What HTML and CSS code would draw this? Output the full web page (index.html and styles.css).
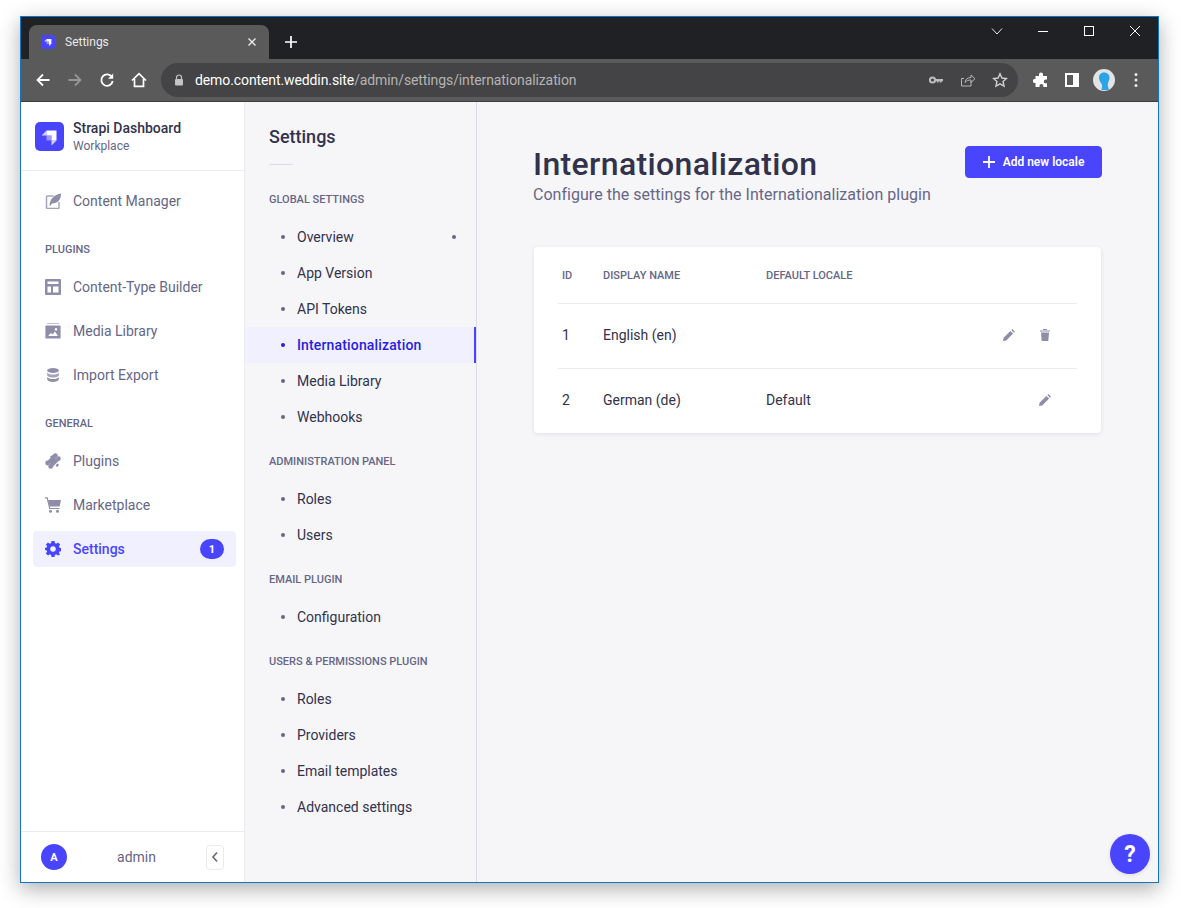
FILE: index.html
```html
<!DOCTYPE html>
<html lang="en">
<head>
<meta charset="utf-8">
<title>Settings</title>
<link rel="stylesheet" href="styles.css">
</head>
<body>
<div class="window">
  <div class="titlebar">
    <div class="tab">
      <span class="fav"><svg viewBox="0 0 29 29" width="14" height="14"><path d="M11.500 8.500H21.500V18.500H16.500V13.500H11.500z" fill="#fff"/><path d="M11.500 8.500V13.500H6.500zM16.500 18.500H21.500L16.500 23.500z" fill="#fff" opacity=".75"/><path d="M11.500 13.500H16.500V18.500H11.500z" fill="#fff" opacity=".45"/></svg></span>
      <span class="tab-title">Settings</span>
      <svg class="tab-x" viewBox="0 0 10 10" width="10" height="10"><path d="M1.500 1.500l7 7M8.500 1.500l-7 7" stroke="#e8eaed" stroke-width="1.400"/></svg>
    </div>
    <svg class="newtab" viewBox="0 0 14 14" width="14" height="14"><path d="M7 1v12M1 7h12" stroke="#fff" stroke-width="1.700"/></svg>
    <div class="winctl">
      <svg viewBox="0 0 12 12" width="12" height="12"><path d="M1 3.500l5 5.500 5-5.500" fill="none" stroke="#e8e8e8"/></svg>
      <svg viewBox="0 0 12 12" width="12" height="12"><path d="M1 6.500h10" stroke="#fff"/></svg>
      <svg viewBox="0 0 12 12" width="12" height="12"><rect x="1.500" y="1.500" width="9" height="9" fill="none" stroke="#fff"/></svg>
      <svg viewBox="0 0 12 12" width="12" height="12"><path d="M1 1l10 10M11 1L1 11" stroke="#fff"/></svg>
    </div>
  </div>
  <div class="toolbar">
    <svg class="tb" viewBox="0 0 16 16" width="16" height="16"><path d="M14.500 8H2.500M8 2.500L2.500 8 8 13.500" fill="none" stroke="#fff" stroke-width="1.800"/></svg>
    <svg class="tb" viewBox="0 0 16 16" width="16" height="16"><path d="M1.500 8h12M8 2.500L13.500 8 8 13.500" fill="none" stroke="#969696" stroke-width="1.800"/></svg>
    <svg class="tb" viewBox="0 0 16 16" width="16" height="16"><path d="M13 5.200A5.700 5.700 0 1 0 13.700 9" fill="none" stroke="#fff" stroke-width="1.800"/><path d="M14.200 1.500v5.200H9z" fill="#fff"/></svg>
    <svg class="tb" viewBox="0 0 16 16" width="16" height="16"><path d="M1 8.500L8 1.700l7 6.800M3.500 7v7.300h9V7" fill="none" stroke="#fff" stroke-width="1.700"/></svg>
    <div class="omnibox">
      <svg class="lock" viewBox="0 0 10 12" width="10" height="12"><path d="M2.500 5V3.500a2.500 2.500 0 0 1 5 0V5" fill="none" stroke="#c4c4c4" stroke-width="1.200"/><rect x="1" y="5" width="8" height="6.500" rx="1" fill="#c4c4c4"/></svg>
      <span class="url"><span class="host">demo.content.weddin.site</span>/admin/settings/internationalization</span>
      <svg class="omni-i first" viewBox="0 0 16 16" width="16" height="16"><circle cx="4.500" cy="8" r="2.600" fill="none" stroke="#bdbdbd" stroke-width="2"/><path d="M7 7h8v2.200h-1.400v1.300h-1.800V9.200h-1.200v1.300H9V9.200H7z" fill="#bdbdbd"/></svg>
      <svg class="omni-i" viewBox="0 0 16 16" width="16" height="16"><path d="M11 9v5H1.500V6.500H4" fill="none" stroke="#b5b5b5"/><path d="M5 10.500c.3-3.500 3-5 6-5V3l4 3.800-4 3.700V8c-2.500 0-4.500.6-6 2.500z" fill="none" stroke="#b5b5b5"/></svg>
      <svg class="omni-i" viewBox="0 0 16 16" width="16" height="16"><path d="M8 1.800l1.900 4.200 4.600.5-3.400 3.100.9 4.600L8 11.900l-4 2.300.9-4.600L1.500 6.500l4.600-.5z" fill="none" stroke="#d0d0d0" stroke-width="1.400"/></svg>
    </div>
    <svg class="ext" viewBox="0 0 16 16" width="16" height="16"><path d="M6 2.500a2 2 0 0 1 4 0V4h4v3.500h-1.300a1.900 1.900 0 0 0 0 3.800H14V15h-3.700v-1.200a1.900 1.900 0 0 0-3.800 0V15H2.500v-4h-.7a2 2 0 0 1 0-4h.7V4H6z" fill="#fff"/></svg>
    <svg class="ext panel" viewBox="0 0 14 14" width="14" height="14"><path d="M0 0h14v14H0z" fill="#fff"/><path d="M2 2h6v10H2z" fill="#5a5a5a"/></svg>
    <svg class="avatar-chrome" viewBox="0 0 22 22" width="22" height="22"><circle cx="11" cy="11" r="11" fill="#e3e3e3"/><path d="M6 8.500C6 5 8.500 3.500 11 3.500s5.500 1.500 5.500 5c0 3-1.500 4.500-1.800 7-.1 1.500 1 3 1 5.500H8.500c.5-2 .8-3.500.5-5-.4-2-3-3.500-3-7.500z" fill="#29a4e8"/></svg>
    <svg class="kebab" viewBox="0 0 4 16" width="4" height="16"><circle cx="2" cy="2.500" r="1.500" fill="#e8e8e8"/><circle cx="2" cy="8" r="1.500" fill="#e8e8e8"/><circle cx="2" cy="13.500" r="1.500" fill="#e8e8e8"/></svg>
  </div>

  <div class="app">
    <nav class="mainnav">
      <div class="brand">
        <span class="logo"><svg viewBox="0 0 29 29" width="29" height="29"><path d="M11.500 8.500H21.500V18.500H16.500V13.500H11.500z" fill="#fff"/><path d="M11.500 8.500V13.500H6.500zM16.500 18.500H21.500L16.500 23.500z" fill="#fff" opacity=".75"/><path d="M11.500 13.500H16.500V18.500H11.500z" fill="#fff" opacity=".45"/></svg></span>
        <div class="brand-text"><div class="brand-name">Strapi Dashboard</div><div class="brand-sub">Workplace</div></div>
      </div>
      <div class="nav-body">
        <a class="nav-item"><svg viewBox="0 0 16 16" width="16" height="16"><path d="M8.500 3H2.500a1 1 0 0 0-1 1v10.500a1 1 0 0 0 1 1H13a1 1 0 0 0 1-1V9" fill="none" stroke="#a5a5ba" stroke-width="1.500"/><path d="M4.500 12.500C5 6 9 1.500 16 .5 16 5 14.300 9 10 10l-3 .6-1.400 2z" fill="#8e8ea9"/></svg><span>Content Manager</span></a>
        <div class="nav-label">PLUGINS</div>
        <a class="nav-item"><svg viewBox="0 0 16 16" width="16" height="16"><path fill-rule="evenodd" d="M1 0h14a1 1 0 0 1 1 1v14a1 1 0 0 1-1 1H1a1 1 0 0 1-1-1V1a1 1 0 0 1 1-1zM2.500 2.500v2.500h11V2.500zM2.500 7.500v6h3.500v-6zM8 7.500v6h5.500v-6z" fill="#8e8ea9"/></svg><span>Content-Type Builder</span></a>
        <a class="nav-item"><svg viewBox="0 0 16 16" width="16" height="16"><path d="M2 0h12v1H2z" fill="#c0c0cf"/><path fill-rule="evenodd" d="M1 2.500h14a.6.6 0 0 1 .6.600V15a.6.6 0 0 1-.6.600H1a.6.6 0 0 1-.6-.600V3.100A.6.6 0 0 1 1 2.500zM3 13h10l-3-4.500-2.500 3-1.500-1.500zM11 5a1.300 1.300 0 1 0 .01 0z" fill="#8e8ea9"/></svg><span>Media Library</span></a>
        <a class="nav-item"><svg viewBox="0 0 16 16" width="16" height="16"><ellipse cx="8" cy="3.500" rx="5.800" ry="2.600" fill="#8e8ea9"/><path d="M2.200 5.500c1 1.400 3 2 5.800 2s4.800-.6 5.800-2v3c-1 1.400-3 2-5.800 2s-4.800-.6-5.800-2z" fill="#a5a5ba"/><path d="M2.200 10c1 1.400 3 2 5.800 2s4.800-.6 5.800-2v2.500c-.5 1.600-3 2.500-5.800 2.500s-5.300-.9-5.800-2.500z" fill="#8e8ea9"/></svg><span>Import Export</span></a>
        <div class="nav-label">GENERAL</div>
        <a class="nav-item"><svg viewBox="0 0 16 16" width="16" height="16"><g fill="#8e8ea9"><path d="M8 2.500L13.500 8 8 13.500 2.500 8z"/><circle cx="10.300" cy="2.600" r="2.400"/><circle cx="13.400" cy="5.700" r="2.400"/><circle cx="2.600" cy="10" r="2.400"/><circle cx="5.700" cy="13.400" r="2.400"/><path d="M5 3.500l2.500-1.500 1 2-2 2.500zM10.500 13l1.500-2.500 2 1-1.500 2.500z"/></g></svg><span>Plugins</span></a>
        <a class="nav-item"><svg viewBox="0 0 16 16" width="16" height="16"><path d="M3 3H16l-1.400 6.500H4.600z" fill="#8e8ea9"/><path d="M0 .8h2.200L4.700 11.500H14.500" fill="none" stroke="#8e8ea9" stroke-width="1.200"/><circle cx="5.500" cy="14.300" r="1.500" fill="#8e8ea9"/><circle cx="12.500" cy="14.300" r="1.500" fill="#8e8ea9"/></svg><span>Marketplace</span></a>
        <a class="nav-item active"><svg viewBox="0 0 16 16" width="16" height="16"><path fill-rule="evenodd" d="M6.500 0h3l.4 2.100 1.300.6L13 1.500l2.100 2.100-1.200 1.800.6 1.300 2.100.4v3l-2.100.4-.6 1.300 1.200 1.800L13 14.500l-1.800-1.200-1.300.6L9.500 16h-3l-.4-2.100-1.300-.6L3 14.500.9 12.400l1.200-1.800-.6-1.300L-.6 8.900V7l2.100-.4.6-1.300L.9 3.600 3 1.500l1.800 1.200 1.300-.6zM8 5.200a2.800 2.800 0 1 0 .01 0z" fill="#4945ff"/></svg><span>Settings</span><b class="badge">1</b></a>
      </div>
      <div class="nav-foot">
        <span class="user-dot">A</span>
        <span class="user-name">admin</span>
        <span class="collapse"><svg viewBox="0 0 8 12" width="8" height="12"><path d="M6 1.500L2 6l4 4.500" fill="none" stroke="#666687" stroke-width="1.600"/></svg></span>
      </div>
    </nav>

    <aside class="subnav">
      <h2 class="sub-title">Settings</h2>
      <div class="sub-rule"></div>
      <div class="sub-label">GLOBAL SETTINGS</div>
      <ul class="sub-list">
        <li class="sub-item">Overview<i class="sub-mark"></i></li>
        <li class="sub-item">App Version</li>
        <li class="sub-item">API Tokens</li>
        <li class="sub-item active">Internationalization</li>
        <li class="sub-item">Media Library</li>
        <li class="sub-item">Webhooks</li>
      </ul>
      <div class="sub-label">ADMINISTRATION PANEL</div>
      <ul class="sub-list">
        <li class="sub-item">Roles</li>
        <li class="sub-item">Users</li>
      </ul>
      <div class="sub-label">EMAIL PLUGIN</div>
      <ul class="sub-list">
        <li class="sub-item">Configuration</li>
      </ul>
      <div class="sub-label">USERS &amp; PERMISSIONS PLUGIN</div>
      <ul class="sub-list">
        <li class="sub-item">Roles</li>
        <li class="sub-item">Providers</li>
        <li class="sub-item">Email templates</li>
        <li class="sub-item">Advanced settings</li>
      </ul>
    </aside>

    <main class="content">
      <header class="page-head">
        <div>
          <h1 class="page-title">Internationalization</h1>
          <p class="page-sub">Configure the settings for the Internationalization plugin</p>
        </div>
        <button class="add-btn"><svg viewBox="0 0 12 12" width="12" height="12"><path d="M6 0v12M0 6h12" stroke="#fff" stroke-width="1.800"/></svg>Add new locale</button>
      </header>
      <section class="card">
        <div class="row head"><span class="c-id">ID</span><span class="c-name">DISPLAY NAME</span><span class="c-def">DEFAULT LOCALE</span></div>
        <div class="row">
          <span class="c-id">1</span><span class="c-name">English (en)</span><span class="c-def"></span>
          <span class="c-act">
            <svg viewBox="0 0 12 12" width="12" height="12"><path d="M0 12l.6-3.300L7.400 1.900l2.700 2.700L3.300 11.400zM8.300 1l1-1L12 2.700l-1 1z" fill="#8e8ea9"/></svg>
            <svg viewBox="0 0 12 12" width="12" height="12"><path d="M1 1.500h10v1H1zM4 0h4v1H4zM2 3.500h8L9.300 12H2.700z" fill="#8e8ea9"/></svg>
          </span>
        </div>
        <div class="row">
          <span class="c-id">2</span><span class="c-name">German (de)</span><span class="c-def">Default</span>
          <span class="c-act">
            <svg viewBox="0 0 12 12" width="12" height="12"><path d="M0 12l.6-3.300L7.400 1.900l2.700 2.700L3.300 11.400zM8.300 1l1-1L12 2.700l-1 1z" fill="#8e8ea9"/></svg>
          </span>
        </div>
      </section>
      <button class="help">?</button>
    </main>
  </div>
</div>
</body>
</html>
```
FILE: styles.css
```css
* { box-sizing: border-box; }
html, body { margin: 0; height: 100%; overflow: hidden; background: #fff; }
body { padding: 16px 26px 25px 20px; font-family: Roboto, sans-serif; font-size: 14px; color: #32324d; }
.window { width: 1139px; height: 867px; border: 1px solid #0f75c4; display: flex; flex-direction: column; box-shadow: 0 6px 20px rgba(0,0,0,.32); background: #fff; }

.titlebar { height: 42px; flex: none; background: #202124; display: flex; align-items: flex-end; padding-left: 8px; position: relative; }
.tab { width: 240px; height: 34px; background: #5a5a5a; border-radius: 8px 8px 0 0; display: flex; align-items: center; padding: 0 12px 0 12px; }
.fav { width: 14px; height: 14px; background: #4945ff; border-radius: 3px; display: flex; }
.tab-title { margin-left: 10px; font-size: 12px; color: #e8eaed; flex: 1; }
.newtab { margin: 0 0 10px 15px; }
.winctl { position: absolute; right: 17px; top: 8px; display: flex; gap: 34px; }
.winctl svg { display: block; }

.toolbar { height: 43px; flex: none; background: #5a5a5a; border-bottom: 1px solid #3c3c3c; display: flex; align-items: center; padding-left: 14px; }
.tb { margin-right: 16px; flex: none; }
.omnibox { width: 857px; height: 34px; border-radius: 17px; background: #444345; display: flex; align-items: center; padding: 0 10px 0 13px; margin-left: -2px; }
.lock { flex: none; }
.url { margin-left: 11px; font-size: 14px; letter-spacing: -.1px; color: #b4b4b4; flex: 1; white-space: nowrap; }
.host { color: #fff; }
.omni-i { flex: none; margin-left: 16px; }
.ext { flex: none; margin-left: 15px; }
.ext.panel { margin-left: 16px; }
.avatar-chrome { flex: none; margin-left: 14px; }
.kebab { flex: none; margin-left: 19px; }

.app { flex: 1; min-height: 0; display: flex; background: #f6f6f9; }
.mainnav { width: 224px; flex: none; background: #fff; border-right: 1px solid #eaeaef; display: flex; flex-direction: column; }
.brand { height: 69px; flex: none; border-bottom: 1px solid #eaeaef; display: flex; align-items: center; padding-left: 14px; gap: 9px; }
.logo { width: 29px; height: 29px; background: #4945ff; border-radius: 5px; display: flex; }
.brand-name { font-size: 14px; font-weight: 500; line-height: 19px; color: #32324d; }
.brand-sub { font-size: 12px; line-height: 16px; color: #666687; }
.nav-body { flex: 1; padding: 12px 8px 0 12px; display: flex; flex-direction: column; gap: 8px; }
.nav-item { height: 36px; display: flex; align-items: center; gap: 12px; padding: 0 12px; color: #666687; font-size: 14px; border-radius: 4px; }
.nav-item svg { flex: none; }
.nav-item.active { background: #f0f0ff; color: #4945ff; font-weight: 500; }
.badge { margin-left: auto; width: 24px; height: 20px; border-radius: 10px; background: #4945ff; color: #fff; font-size: 11px; font-weight: 700; display: flex; align-items: center; justify-content: center; }
.nav-label { height: 16px; line-height: 18px; font-size: 11px; font-weight: 500; color: #666687; padding-left: 12px; margin: 14px 0 4px; }
.nav-foot { height: 51px; flex: none; border-top: 1px solid #eaeaef; display: flex; align-items: center; padding: 0 20px 0 20px; position: relative; }
.user-dot { width: 26px; height: 26px; border-radius: 50%; background: #4945ff; color: #fff; font-size: 11px; font-weight: 700; display: flex; align-items: center; justify-content: center; }
.user-name { flex: 1; text-align: center; color: #666687; font-size: 14px; }
.collapse { width: 18px; height: 25px; border: 1px solid #eaeaef; border-radius: 4px; display: flex; align-items: center; justify-content: center; }

.subnav { width: 232px; flex: none; border-right: 1px solid #dcdce4; }
.sub-title { margin: 22px 0 0 24px; font-size: 18px; line-height: 26px; font-weight: 500; color: #32324d; }
.sub-rule { width: 24px; height: 1px; background: #dcdce4; margin: 14px 0 -1px 24px; }
.sub-label { height: 16px; font-size: 11px; line-height: 18px; font-weight: 500; color: #666687; padding-left: 24px; margin-top: 27px; }
.sub-list { list-style: none; margin: 12px 0 -9px; padding: 0; }
.sub-item { height: 36px; display: flex; align-items: center; padding-left: 52px; position: relative; font-size: 14px; color: #32324d; }
.sub-item::before { content: ""; position: absolute; left: 36px; top: 16px; width: 4px; height: 4px; border-radius: 50%; background: #666687; }
.sub-mark { position: absolute; left: 207px; top: 16px; width: 4px; height: 4px; border-radius: 50%; background: #666687; }
.sub-item.active { background: #f0f0ff; color: #271fe0; font-weight: 500; letter-spacing: .15px; border-right: 2px solid #4945ff; }
.sub-item.active::before { background: #271fe0; }

.content { flex: 1; min-width: 0; padding: 40px 56px 0 56px; position: relative; }
.page-head { display: flex; justify-content: space-between; align-items: flex-start; }
.page-title { margin: 0; font-size: 32px; line-height: 44px; font-weight: 500; letter-spacing: .35px; color: #32324d; }
.page-sub { margin: 0; font-size: 16px; line-height: 18px; letter-spacing: .03px; color: #666687; }
.add-btn { margin-top: 4px; width: 137px; height: 32px; border: 1px solid #4945ff; border-radius: 4px; background: #4945ff; color: #fff; font: 600 12px Roboto, sans-serif; display: flex; align-items: center; justify-content: center; gap: 8px; padding: 0; }
.card { margin: 43px 1px 0 1px; background: #fff; border-radius: 4px; box-shadow: 0 1px 4px rgba(33,33,52,.1); padding: 0 24px; height: 186px; }
.row { height: 65px; display: flex; align-items: center; border-top: 1px solid #eaeaef; padding-bottom: 2px; font-size: 14px; color: #32324d; position: relative; }
.row.head { height: 56px; border-top: 0; padding-bottom: 0; font-size: 11px; font-weight: 500; color: #666687; }
.c-id { width: 45px; padding-left: 4px; }
.c-name { width: 163px; }
.c-def { width: 150px; }
.c-act { position: absolute; right: 26px; display: flex; gap: 24px; }
.help { position: absolute; right: 8px; bottom: 8px; width: 40px; height: 40px; border-radius: 50%; border: 0; background: #4945ff; color: #fff; font: 700 23px Roboto, sans-serif; padding: 0; box-shadow: 0 1px 4px rgba(33,33,52,.1); }
```
